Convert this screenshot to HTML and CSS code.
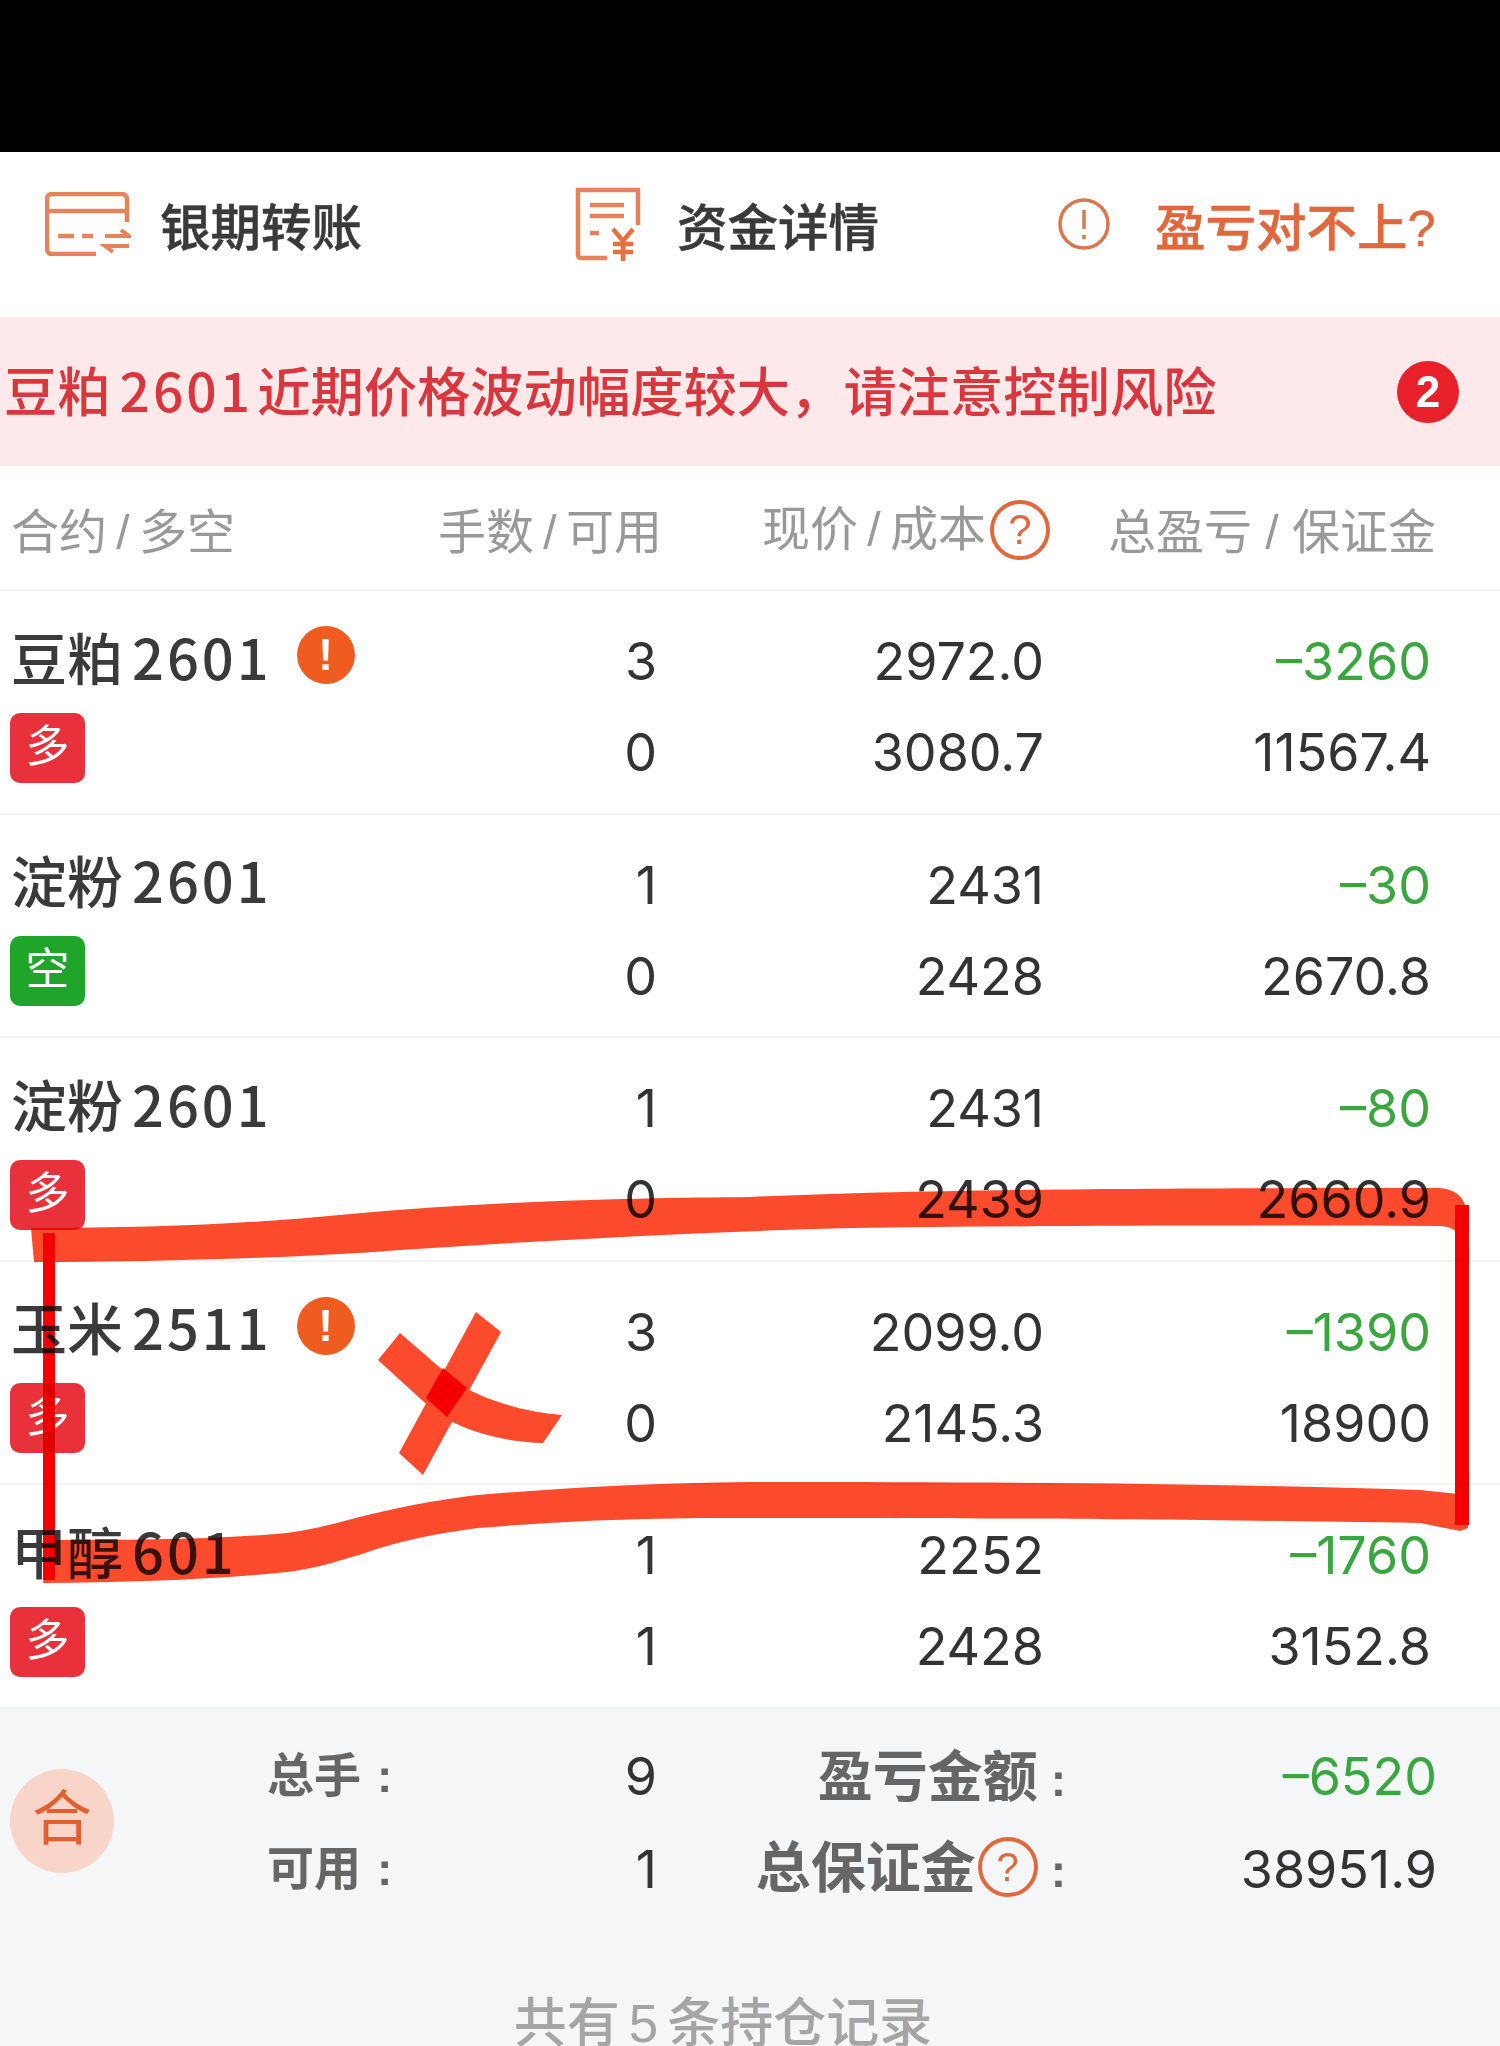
FILE: index.html
```html
<!DOCTYPE html>
<html lang="zh">
<head>
    <meta charset="UTF-8">
    <meta name="viewport" content="width=device-width, initial-scale=1.0">
    <title>持仓</title>
    <link rel="stylesheet" href="styles.css">
</head>
<body>
    <div class="screen">
        <div class="topbar"></div>

        <div class="toolbar">
            <a class="tool">
                <svg class="tool-icon card-icon" viewBox="0 0 86 64" fill="none" stroke="#e5835c" stroke-width="4.5">
                    <path d="M82 30V7a5 5 0 0 0-5-5H7a5 5 0 0 0-5 5v50a5 5 0 0 0 5 5h44"/>
                    <path d="M2 19H82"/>
                    <path d="M13 44H29M37 44H48"/>
                    <path d="M60 44H84L76 38M84 54H60L68 60" stroke-width="4"/>
                </svg>
                <span>银期转账</span>
            </a>
            <a class="tool">
                <svg class="tool-icon doc-icon" viewBox="0 0 66 74" fill="none" stroke="#e5835c" stroke-width="4.5">
                    <path d="M63 38V3H3V68a3 3 0 0 0 3 3H32"/>
                    <path d="M15 18H49M15 29H49M15 46H24"/>
                    <path d="M38 42L48 54L58 42M48 54V74M38 57H58M38 65H58" stroke="#e8703f"/>
                </svg>
                <span>资金详情</span>
            </a>
            <a class="tool tool-warn">
                <svg class="tool-icon info-icon" viewBox="0 0 52 52" fill="none" stroke="#d9784f" stroke-width="3.5">
                    <circle cx="26" cy="26" r="24"/>
                    <path d="M26 12V31M26 37V41"/>
                </svg>
                <span>盈亏对不上?</span>
            </a>
        </div>

        <div class="notice">
            <span class="notice-text">豆粕<i class="gap"></i><span class="digits">2601</span><i class="gap-small"></i>近期价格波动幅度较大，请注意控制风险</span>
            <span class="notice-count">2</span>
        </div>

        <div class="table-head">
            <span class="tight">合约 / 多空</span>
            <span class="right tight">手数 / 可用</span>
            <span class="right tight">现价 / 成本<b class="help">?</b></span>
            <span class="right">总盈亏 / 保证金</span>
        </div>

        <div class="row">
            <div class="name">豆粕<i class="gap"></i><span class="digits">2601</span><b class="alert">!</b></div>
            <div class="val">3</div>
            <div class="val">2972.0</div>
            <div class="val loss">–3260</div>
            <div class="tag-cell"><span class="tag">多</span></div>
            <div class="val">0</div>
            <div class="val">3080.7</div>
            <div class="val">11567.4</div>
        </div>
        <div class="row">
            <div class="name">淀粉<i class="gap"></i><span class="digits">2601</span></div>
            <div class="val">1</div>
            <div class="val">2431</div>
            <div class="val loss">–30</div>
            <div class="tag-cell"><span class="tag tag-short">空</span></div>
            <div class="val">0</div>
            <div class="val">2428</div>
            <div class="val">2670.8</div>
        </div>
        <div class="row">
            <div class="name">淀粉<i class="gap"></i><span class="digits">2601</span></div>
            <div class="val">1</div>
            <div class="val">2431</div>
            <div class="val loss">–80</div>
            <div class="tag-cell"><span class="tag">多</span></div>
            <div class="val">0</div>
            <div class="val">2439</div>
            <div class="val">2660.9</div>
        </div>
        <div class="row">
            <div class="name">玉米<i class="gap"></i><span class="digits">2511</span><b class="alert">!</b></div>
            <div class="val">3</div>
            <div class="val">2099.0</div>
            <div class="val loss">–1390</div>
            <div class="tag-cell"><span class="tag">多</span></div>
            <div class="val">0</div>
            <div class="val">2145.3</div>
            <div class="val">18900</div>
        </div>
        <div class="row">
            <div class="name">甲醇<i class="gap"></i><span class="digits">601</span></div>
            <div class="val">1</div>
            <div class="val">2252</div>
            <div class="val loss">–1760</div>
            <div class="tag-cell"><span class="tag">多</span></div>
            <div class="val">1</div>
            <div class="val">2428</div>
            <div class="val">3152.8</div>
        </div>

        <div class="summary">
            <div class="summary-top">
                <span class="total-mark">合</span>
                <div class="totals">
                    <div class="total-label">总手<span class="colon">:</span></div>
                    <div class="total-val">9</div>
                    <div class="total-label total-label-big right">盈亏金额<span class="colon">:</span></div>
                    <div class="total-val loss">–6520</div>
                    <div class="total-label">可用<span class="colon">:</span></div>
                    <div class="total-val">1</div>
                    <div class="total-label total-label-big right">总保证金<b class="help">?</b><span class="colon">:</span></div>
                    <div class="total-val">38951.9</div>
                </div>
            </div>
            <div class="record-count">共有<i class="gap"></i>5<i class="gap"></i>条持仓记录</div>
        </div>

        <!-- hand drawn marks on top of the screenshot -->
        <svg class="marks" viewBox="0 0 1500 2046">
            <path class="brush" d="M31 1228C150 1228 250 1224 350 1214C500 1200 650 1198 750 1197C900 1190 1100 1188 1440 1188Q1468 1190 1468 1222V1235L1457 1232Q1450 1226 1440 1226C1200 1225 1000 1226 850 1228C700 1232 550 1240 400 1250C300 1258 150 1262 34 1262Z"/>
            <path class="brush" d="M1468 1495L1420 1490C1200 1483 1000 1482 750 1482C650 1483 560 1488 478 1495C420 1502 390 1510 359 1517C330 1525 310 1530 287 1533C210 1540 130 1540 50 1540L43 1583C130 1582 210 1580 287 1572C320 1568 340 1560 359 1555C400 1540 440 1533 478 1528C600 1518 680 1518 750 1518C900 1518 1100 1518 1420 1523L1460 1531L1468 1528Z"/>
            <path class="brush" d="M476 1312L501 1332L423 1475L399 1453Z"/>
            <path class="brush" d="M400 1333L378 1360L435 1412C465 1432 505 1442 543 1443L562 1415C525 1412 490 1402 460 1385Z"/>
            <path class="pen" d="M443 1368L467 1388L447 1417L426 1398Z"/>
            <path class="pen" d="M43 1233H55V1580H43Z"/>
            <path class="pen" d="M1455 1205H1469V1525H1455Z"/>
        </svg>
    </div>
</body>
</html>
```

FILE: styles.css
```css
html, body {
    margin: 0;
    height: 2046px;
    overflow: hidden;
    background-color: #fff;
}
.screen {
    position: relative;
    height: 2046px;
    overflow: hidden;
    color: #333;
    font-family: 'Liberation Sans', 'Noto Sans CJK SC', sans-serif;
    filter: blur(0.6px);
}
.topbar {
    height: 152px;
    background-color: #000;
}
.right {
    text-align: right;
}
.loss {
    color: #3aa63f;
}
.gap {
    display: inline-block;
    width: 9px;
}
.gap-small {
    display: inline-block;
    width: 4px;
}
.digits {
    font-family: 'Noto Sans CJK SC', sans-serif;
    letter-spacing: 3px;
}

/* toolbar */
.toolbar {
    display: grid;
    grid-template-columns: 530px 483px 1fr;
    align-items: center;
    box-sizing: border-box;
    height: 165px;
    padding: 0 0 21px 45px;
}
.tool {
    display: flex;
    align-items: center;
    font-size: 50.5px;
    font-weight: 500;
    color: #3a3a3a;
    -webkit-text-stroke: 0.5px;
}
.tool-warn {
    color: #e0683c;
}
.card-icon {
    width: 86px;
    height: 64px;
    margin-right: 29px;
}
.doc-icon {
    width: 66px;
    height: 74px;
    margin-right: 36px;
}
.info-icon {
    width: 52px;
    height: 52px;
    margin-right: 45px;
}

/* notice */
.notice {
    display: flex;
    align-items: center;
    justify-content: space-between;
    height: 149px;
    padding: 0 41px 0 4px;
    background-color: #fde8ea;
    font-size: 53.3px;
    font-weight: 500;
    color: #d9363e;
}
.notice-text {
    margin-top: -6px;
}
.notice-count {
    width: 62px;
    height: 62px;
    border-radius: 50%;
    background-color: #e8202a;
    color: #fff;
    font-size: 44px;
    font-weight: 700;
    line-height: 62px;
    text-align: center;
}

/* table */
.table-head {
    display: grid;
    grid-template-columns: 400px 251px 388px 386px;
    align-items: center;
    height: 123px;
    padding-left: 11px;
    border-bottom: 2px solid #f2f2f2;
    font-size: 48px;
    color: #999;
}
.tight {
    word-spacing: -4px;
}
.help {
    display: inline-block;
    box-sizing: border-box;
    width: 60px;
    height: 60px;
    margin-bottom: 5px;
    margin-left: 4px;
    border: 4px solid #e0683c;
    border-radius: 50%;
    color: #e0683c;
    font-size: 42px;
    font-weight: 400;
    line-height: 52px;
    text-align: center;
    vertical-align: middle;
}
.row {
    display: grid;
    grid-template-columns: 400px 246px 387px 387px;
    grid-template-rows: 91px 91px;
    box-sizing: border-box;
    height: 223.5px;
    padding: 25px 0 0 11px;
    border-bottom: 2px solid #f2f2f2;
}
.name {
    display: flex;
    align-items: center;
    height: 78px;
    font-size: 56px;
    font-weight: 500;
    color: #3a3a3a;
}
.alert {
    width: 58px;
    height: 58px;
    margin-left: 25px;
    border-radius: 50%;
    background-color: #ee5d1f;
    color: #fff;
    font-size: 44px;
    line-height: 58px;
    text-align: center;
}
.val {
    font-family: 'Inter', sans-serif;
    font-size: 52px;
    line-height: 91px;
    text-align: right;
}
.tag-cell {
    display: flex;
    align-items: center;
    margin-left: -1px;
    margin-bottom: 10px;
}
.tag {
    width: 75px;
    height: 70px;
    border-radius: 10px;
    background-color: #e8313a;
    color: #fff;
    font-size: 44px;
    line-height: 68px;
    text-align: center;
}
.tag-short {
    background-color: #1ea52a;
}

/* summary */
.summary {
    height: 340px;
    background-color: #f5f6f8;
}
.summary-top {
    display: flex;
    align-items: center;
    height: 224px;
}
.total-mark {
    flex: none;
    width: 104px;
    height: 104px;
    margin-left: 10px;
    border-radius: 50%;
    background-color: #f9d5c9;
    color: #e0602f;
    font-size: 60px;
    line-height: 102px;
    text-align: center;
}
.totals {
    display: grid;
    grid-template-columns: 130px 260px 409px 371px;
    grid-template-rows: 93px 93px;
    margin-left: 153px;
    align-items: center;
}
.total-label {
    margin-top: -5px;
    font-size: 47px;
    font-weight: 700;
    color: #666;
    white-space: nowrap;
}
.total-label-big {
    font-size: 55px;
}
.total-label-big .help {
    margin-bottom: 9px;
    margin-left: 2px;
    font-size: 40px;
}
.total-label-big .colon {
    margin-left: 13px;
}
.colon {
    display: inline-block;
    margin-left: 16px;
    font-size: 46px;
}
.total-val {
    margin-top: 5px;
    font-family: 'Inter', sans-serif;
    font-size: 52px;
    text-align: right;
}
.record-count {
    margin-top: 48px;
    padding-right: 54px;
    font-size: 53px;
    font-weight: 500;
    color: #a5a5a5;
    text-align: center;
}

/* marks */
.marks {
    position: absolute;
    top: 0;
    left: 0;
    width: 1500px;
    height: 2046px;
    mix-blend-mode: multiply;
}
.brush {
    fill: #fc4a2c;
}
.pen {
    fill: #f40000;
}
```
